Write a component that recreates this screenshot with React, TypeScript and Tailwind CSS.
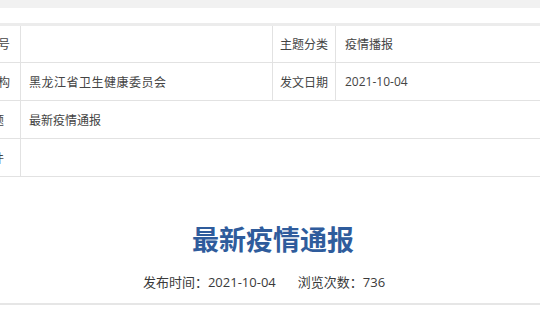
export default function App() {
  const font = { fontFamily: '"Microsoft YaHei", "Noto Sans CJK SC", "Noto Sans", sans-serif' };
  const num = { fontFamily: '"Open Sans", "Noto Sans", sans-serif' };
  return (
    <div className="w-[540px] h-[320px] overflow-hidden bg-white text-[#444]" style={font}>
      <div className="h-[8px] bg-[#f1f1f1]" />
      <div className="mt-[15px] ml-[-43px]">
        <table className="border-collapse w-[640px] text-[12px] table-fixed">
          <colgroup>
            <col className="w-[63px]" />
            <col className="w-[252px]" />
            <col className="w-[63px]" />
            <col />
          </colgroup>
          <tbody>
            <tr className="h-[38px] border-t-[3px] border-[#ececec]">
              <td className="border border-[#e2e2e2] text-center pr-[6px]">发文字号</td>
              <td className="border border-[#e2e2e2] pl-[8px]"></td>
              <td className="border border-[#e2e2e2] text-center">主题分类</td>
              <td className="border border-[#e2e2e2] pl-[9px]">疫情播报</td>
            </tr>
            <tr className="h-[38px]">
              <td className="border border-[#e2e2e2] text-center pr-[6px]">发文机构</td>
              <td className="border border-[#e2e2e2] pl-[8px] tracking-[0.5px]">黑龙江省卫生健康委员会</td>
              <td className="border border-[#e2e2e2] text-center">发文日期</td>
              <td className="border border-[#e2e2e2] pl-[9px]" style={num}>2021-10-04</td>
            </tr>
            <tr className="h-[38px]">
              <td className="border border-[#e2e2e2] text-center pr-[6px]">标　题</td>
              <td className="border border-[#e2e2e2] pl-[8px]" colSpan={3}>最新疫情通报</td>
            </tr>
            <tr className="h-[38px]">
              <td className="border border-[#e2e2e2] text-center pr-[6px]">附　件</td>
              <td className="border border-[#e2e2e2] pl-[8px]" colSpan={3}></td>
            </tr>
          </tbody>
        </table>
      </div>
      <div className="mt-[44px] flex justify-center pl-[6px]">
        <h1 className="text-[27px] leading-[36px] font-bold text-[#2f5c9c]">最新疫情通报</h1>
      </div>
      <div className="mt-[15px] flex justify-center gap-[22px] text-[13px] leading-[20px] text-[#3a3a3a] pr-[12px]">
        <span>发布时间：<span style={num}>2021-10-04</span></span>
        <span>浏览次数：<span style={num}>736</span></span>
      </div>
      <div className="mt-[11px] h-[2px] bg-[#e6e6e6]" />
    </div>
  );
}
